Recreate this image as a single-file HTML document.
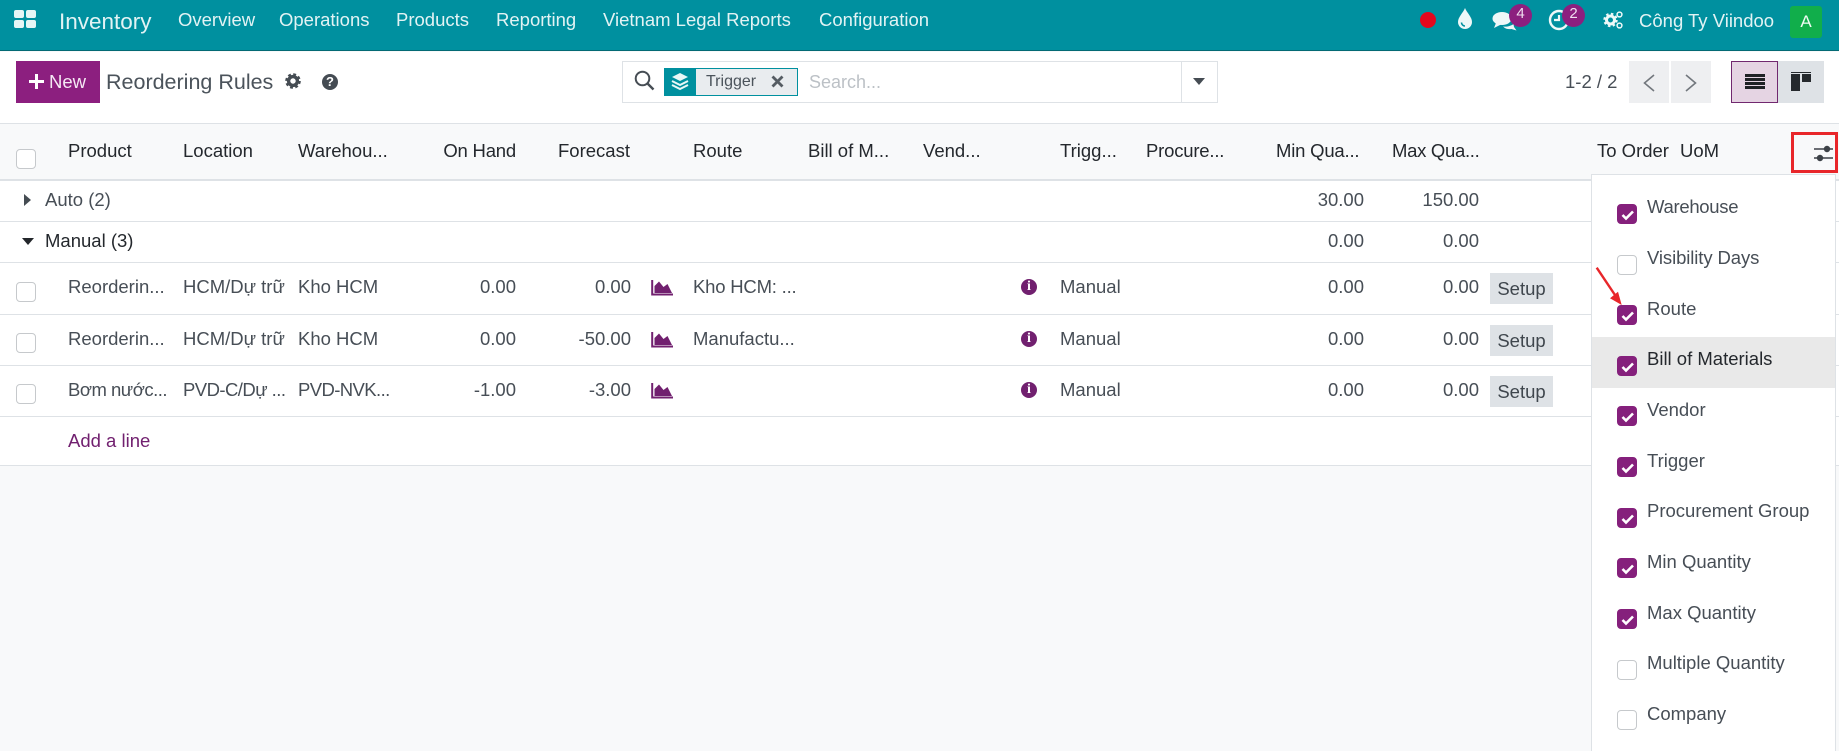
<!DOCTYPE html>
<html><head><meta charset="utf-8"><title>Reordering Rules</title>
<style>
html,body{margin:0;padding:0;width:1839px;height:751px;overflow:hidden;background:#f8f9fa}
body{font-family:"Liberation Sans","Noto Sans CJK SC",sans-serif;font-size:18.5px;color:#474e56;position:relative}
.a{position:absolute;box-sizing:border-box}
.t{position:absolute;white-space:nowrap;line-height:24px;margin-top:-12px}
.r{transform:translateX(-100%)}
.n{color:#e2f3f4}
.h{color:#24282d}
.line{position:absolute;left:0;width:1839px;height:1px;background:#dee2e6}
.cb{position:absolute;box-sizing:border-box;width:20px;height:20px;border:1px solid #c6c9cc;border-radius:4px;background:#fff}
.cb.on{background:#85207c;border-color:#85207c}
.cb.on svg{position:absolute;left:3px;top:4px}
.setup{position:absolute;left:1490px;width:63px;background:#dee2e6;color:#3f464d;text-align:center;line-height:31px;height:31px}
svg{position:absolute;display:block}
</style></head><body>

<!-- navbar -->
<div class="a" style="left:0;top:0;width:1839px;height:51px;background:#00909f;border-bottom:1px solid #046a74"></div>
<div class="a" style="left:14px;top:10px;width:10px;height:8px;background:#e6f6f6;border-radius:2px"></div>
<div class="a" style="left:26px;top:10px;width:10px;height:8px;background:#e6f6f6;border-radius:2px"></div>
<div class="a" style="left:14px;top:20px;width:10px;height:8px;background:#e6f6f6;border-radius:2px"></div>
<div class="a" style="left:26px;top:20px;width:10px;height:8px;background:#e6f6f6;border-radius:2px"></div>
<div class="t n" style="left:59px;top:21.500px;font-size:22.500px">Inventory</div>
<div class="t n" style="left:178px;top:20px">Overview</div>
<div class="t n" style="left:279px;top:20px">Operations</div>
<div class="t n" style="left:396px;top:20px">Products</div>
<div class="t n" style="left:496px;top:20px">Reporting</div>
<div class="t n" style="left:603px;top:20px">Vietnam Legal Reports</div>
<div class="t n" style="left:819px;top:20px">Configuration</div>

<div class="a" style="left:1420px;top:12px;width:16px;height:16px;border-radius:50%;background:#e3071d"></div>
<svg style="left:1457px;top:8px" width="16" height="21" viewBox="0 0 16 21"><path d="M8 0C6 5 1 9 1 14a7 7 0 0 0 14 0C15 9 10 5 8 0Z" fill="#eef8f8"/><path d="M4.500 14.500a3.500 3.500 0 0 0 3.500 3.500" fill="none" stroke="#00909f" stroke-width="1.600"/></svg>
<svg style="left:1492px;top:10px" width="26" height="22" viewBox="0 0 26 22"><ellipse cx="10" cy="8.500" rx="9.500" ry="6.500" fill="#eef8f8"/><path d="M4 13l-2 5 7-3.500Z" fill="#eef8f8"/><path d="M11 16.500c4 .5 8-.5 10.500-2.500l.5 3 2.500 3.500-5-1.500c-3 .5-6 0-8.500-2.500Z" fill="#eef8f8"/></svg>
<div class="a" style="left:1509px;top:4px;width:23px;height:23px;border-radius:50%;background:#8c1f7f"></div>
<div class="t" style="left:1509px;top:14px;width:23px;text-align:center;color:#f0dff0;font-size:15px">4</div>
<svg style="left:1548px;top:9px" width="24" height="23" viewBox="0 0 24 23"><circle cx="11" cy="11" r="9" fill="none" stroke="#eef8f8" stroke-width="2.400"/><path d="M11 6v5H6" fill="none" stroke="#eef8f8" stroke-width="2.200"/></svg>
<div class="a" style="left:1562px;top:4px;width:23px;height:23px;border-radius:50%;background:#8c1f7f"></div>
<div class="t" style="left:1562px;top:14px;width:23px;text-align:center;color:#f0dff0;font-size:15px">2</div>
<svg style="left:1603px;top:10px" width="21" height="20" viewBox="0 0 21 20"><circle cx="7.500" cy="10" r="4" fill="none" stroke="#eef8f8" stroke-width="3"/><circle cx="7.500" cy="10" r="6.200" fill="none" stroke="#eef8f8" stroke-width="2" stroke-dasharray="2.500 2.400"/><circle cx="16.500" cy="4.500" r="2.400" fill="none" stroke="#eef8f8" stroke-width="1.500"/><circle cx="16.500" cy="15.500" r="2.400" fill="none" stroke="#eef8f8" stroke-width="1.500"/></svg>
<div class="t n" style="left:1639px;top:20.500px">Công Ty Viindoo</div>
<div class="a" style="left:1790px;top:6px;width:32px;height:32px;background:#11ae4b;border-radius:3px;color:#eefbf2;text-align:center;line-height:32px;font-size:17px">A</div>

<!-- control panel -->
<div class="a" style="left:0;top:52px;width:1839px;height:71px;background:#fff"></div>
<div class="a" style="left:16px;top:61px;width:84px;height:42px;background:#8c1f7f"></div>
<svg style="left:29px;top:74px" width="15" height="15" viewBox="0 0 15 15"><path d="M6 0h3v6h6v3H9v6H6V9H0V6h6Z" fill="#fff"/></svg>
<div class="t" style="left:49px;top:81.500px;color:#f5e9f4">New</div>
<div class="t" style="left:106px;top:81.500px;font-size:21.500px;color:#4b535b">Reordering Rules</div>
<svg style="left:285px;top:73px" width="16" height="16" viewBox="0 0 17 17"><circle cx="8.500" cy="8.500" r="4.700" fill="none" stroke="#454c53" stroke-width="3.600"/><circle cx="8.500" cy="8.500" r="7" fill="none" stroke="#454c53" stroke-width="2.600" stroke-dasharray="3 2.500"/></svg>
<div class="a" style="left:322px;top:74px;width:16px;height:16px;border-radius:50%;background:#454c53;color:#fff;font-weight:bold;font-size:13px;line-height:16px;text-align:center">?</div>

<!-- search -->
<div class="a" style="left:622px;top:61px;width:596px;height:42px;border:1px solid #dee2e6;background:#fff"></div>
<div class="a" style="left:1181px;top:61px;width:1px;height:42px;background:#dee2e6"></div>
<svg style="left:634px;top:70px" width="21" height="21" viewBox="0 0 21 21"><circle cx="8.500" cy="8.500" r="6.800" fill="none" stroke="#464d54" stroke-width="2"/><path d="M13.500 13.500l6 6" stroke="#464d54" stroke-width="2.400"/></svg>
<div class="a" style="left:664px;top:68px;width:134px;height:28px;background:#e9ecef;border:1px solid #00909f"></div>
<div class="a" style="left:664px;top:68px;width:32px;height:28px;background:#00909f"></div>
<svg style="left:671px;top:73px" width="18" height="19" viewBox="0 0 18 19"><path d="M9 0l8 4-8 4-8-4Z" fill="#eaf7f7"/><path d="M1 8l8 4 8-4M1 12l8 4 8-4" fill="none" stroke="#eaf7f7" stroke-width="2"/></svg>
<div class="t" style="left:706px;top:82px;font-size:16px;color:#4b535b">Trigger</div>
<svg style="left:771px;top:75px" width="13" height="13" viewBox="0 0 13 13"><path d="M1.500 1.500l10 10M11.500 1.500l-10 10" stroke="#555c63" stroke-width="2.800"/></svg>
<div class="t" style="left:809px;top:82px;color:#bcc1c6;font-size:18px">Search...</div>
<svg style="left:1193px;top:78px" width="12" height="7" viewBox="0 0 12 7"><path d="M0 0h12L6 7Z" fill="#454c53"/></svg>

<!-- pager -->
<div class="t" style="left:1565px;top:82px">1-2 / 2</div>
<div class="a" style="left:1629px;top:61px;width:40px;height:42px;background:#eeeff1"></div>
<div class="a" style="left:1671px;top:61px;width:40px;height:42px;background:#eeeff1"></div>
<svg style="left:1643px;top:73.500px" width="12" height="18" viewBox="0 0 12 18"><path d="M11 1L1.500 9 11 17" fill="none" stroke="#72777d" stroke-width="1.600"/></svg>
<svg style="left:1685px;top:73.500px" width="12" height="18" viewBox="0 0 12 18"><path d="M1 1l9.500 8L1 17" fill="none" stroke="#72777d" stroke-width="1.600"/></svg>
<div class="a" style="left:1731px;top:61px;width:47px;height:42px;background:#e5d4e3;border:1px solid #71286f"></div>
<div class="a" style="left:1778px;top:61px;width:46px;height:42px;background:#dee2e6"></div>
<svg style="left:1745px;top:74px" width="20" height="15" viewBox="0 0 20 15"><path d="M0 0h20v3H0ZM0 4h20v3H0ZM0 8h20v3H0ZM0 12h20v3H0Z" fill="#1f2226"/></svg>
<svg style="left:1791px;top:72px" width="20" height="19" viewBox="0 0 20 19"><path d="M0 0h20v1H0ZM0 2h9v17H0ZM11 2h9v8h-9Z" fill="#25292d"/></svg>

<!-- list header -->
<div class="a" style="left:0;top:123px;width:1839px;height:58px;background:#f8f9fa;border-top:1px solid #dee2e6;border-bottom:2px solid #dee2e6"></div>
<div class="cb" style="left:16px;top:149px"></div>
<div class="t h" style="left:68px;top:151px">Product</div>
<div class="t h" style="left:183px;top:151px">Location</div>
<div class="t h" style="left:298px;top:151px">Warehou...</div>
<div class="t h r" style="left:516px;top:151px;letter-spacing:-.2px">On Hand</div>
<div class="t h" style="left:558px;top:151px">Forecast</div>
<div class="t h" style="left:693px;top:151px">Route</div>
<div class="t h" style="left:808px;top:151px">Bill of M...</div>
<div class="t h" style="left:923px;top:151px">Vend...</div>
<div class="t h" style="left:1060px;top:151px">Trigg...</div>
<div class="t h" style="left:1146px;top:151px;letter-spacing:-.2px">Procure...</div>
<div class="t h" style="left:1276px;top:151px;letter-spacing:-.2px">Min Qua...</div>
<div class="t h" style="left:1392px;top:151px;letter-spacing:-.3px">Max Qua...</div>
<div class="t h" style="left:1597px;top:151px">To Order</div>
<div class="t h" style="left:1680px;top:151px">UoM</div>
<div class="a" style="left:1791px;top:132px;width:47px;height:41px;border:3px solid #e8262a"></div>
<svg style="left:1814px;top:145px" width="19" height="18" viewBox="0 0 19 18"><path d="M0 4h19M0 13h19" stroke="#3c4147" stroke-width="1.600"/><circle cx="13" cy="4" r="3.200" fill="#3c4147"/><circle cx="6" cy="13" r="3.200" fill="#3c4147"/></svg>

<!-- body -->
<div class="a" style="left:0;top:181px;width:1839px;height:284px;background:#fff"></div>
<div class="line" style="top:221px"></div>
<div class="line" style="top:262px"></div>
<div class="line" style="top:314px"></div>
<div class="line" style="top:365px"></div>
<div class="line" style="top:416px"></div>
<div class="line" style="top:465px"></div>

<svg style="left:24px;top:194px" width="7" height="12" viewBox="0 0 7 12"><path d="M0 0l7 6-7 6Z" fill="#454c53"/></svg>
<div class="t" style="left:45px;top:200px">Auto (2)</div>
<div class="t r" style="left:1364px;top:200px">30.00</div>
<div class="t r" style="left:1479px;top:200px">150.00</div>
<svg style="left:22px;top:238px" width="12" height="7" viewBox="0 0 12 7"><path d="M0 0h12L6 7Z" fill="#23272b"/></svg>
<div class="t h" style="left:45px;top:241px">Manual (3)</div>
<div class="t r" style="left:1364px;top:241px">0.00</div>
<div class="t r" style="left:1479px;top:241px">0.00</div>

<!-- row 1 -->
<div class="cb" style="left:16px;top:282px"></div>
<div class="t" style="left:68px;top:286.500px">Reorderin...</div>
<div class="t" style="left:183px;top:286.500px">HCM/Dự trữ</div>
<div class="t" style="left:298px;top:286.500px">Kho HCM</div>
<div class="t r" style="left:516px;top:286.500px">0.00</div>
<div class="t r" style="left:631px;top:286.500px">0.00</div>
<svg style="left:651px;top:280px" width="22" height="16" viewBox="0 0 22 16"><path d="M1.200 0v14.500h21" fill="none" stroke="#71206f" stroke-width="2"/><path d="M3.500 13V6L8 1.500 12.500 7l4-3L21 13Z" fill="#71206f"/></svg>
<div class="t" style="left:693px;top:286.500px;letter-spacing:-.2px">Kho HCM: ...</div>
<div class="a" style="left:1021px;top:279px;width:16px;height:16px;border-radius:50%;background:#71206f;color:#fff;font-weight:bold;font-size:14px;line-height:16px;text-align:center;font-family:'Liberation Serif',serif">i</div>
<div class="t" style="left:1060px;top:286.500px">Manual</div>
<div class="t r" style="left:1364px;top:286.500px">0.00</div>
<div class="t r" style="left:1479px;top:286.500px">0.00</div>
<div class="setup" style="top:273px">Setup</div>

<!-- row 2 -->
<div class="cb" style="left:16px;top:333px"></div>
<div class="t" style="left:68px;top:338.500px">Reorderin...</div>
<div class="t" style="left:183px;top:338.500px">HCM/Dự trữ</div>
<div class="t" style="left:298px;top:338.500px">Kho HCM</div>
<div class="t r" style="left:516px;top:338.500px">0.00</div>
<div class="t r" style="left:631px;top:338.500px">-50.00</div>
<svg style="left:651px;top:332px" width="22" height="16" viewBox="0 0 22 16"><path d="M1.200 0v14.500h21" fill="none" stroke="#71206f" stroke-width="2"/><path d="M3.500 13V6L8 1.500 12.500 7l4-3L21 13Z" fill="#71206f"/></svg>
<div class="t" style="left:693px;top:338.500px">Manufactu...</div>
<div class="a" style="left:1021px;top:331px;width:16px;height:16px;border-radius:50%;background:#71206f;color:#fff;font-weight:bold;font-size:14px;line-height:16px;text-align:center;font-family:'Liberation Serif',serif">i</div>
<div class="t" style="left:1060px;top:338.500px">Manual</div>
<div class="t r" style="left:1364px;top:338.500px">0.00</div>
<div class="t r" style="left:1479px;top:338.500px">0.00</div>
<div class="setup" style="top:325px">Setup</div>

<!-- row 3 -->
<div class="cb" style="left:16px;top:384px"></div>
<div class="t" style="left:68px;top:390px;letter-spacing:-.5px">Bơm nước...</div>
<div class="t" style="left:183px;top:390px;letter-spacing:-.55px">PVD-C/Dự ...</div>
<div class="t" style="left:298px;top:390px;letter-spacing:-.6px">PVD-NVK...</div>
<div class="t r" style="left:516px;top:390px">-1.00</div>
<div class="t r" style="left:631px;top:390px">-3.00</div>
<svg style="left:651px;top:383px" width="22" height="16" viewBox="0 0 22 16"><path d="M1.200 0v14.500h21" fill="none" stroke="#71206f" stroke-width="2"/><path d="M3.500 13V6L8 1.500 12.500 7l4-3L21 13Z" fill="#71206f"/></svg>
<div class="a" style="left:1021px;top:382px;width:16px;height:16px;border-radius:50%;background:#71206f;color:#fff;font-weight:bold;font-size:14px;line-height:16px;text-align:center;font-family:'Liberation Serif',serif">i</div>
<div class="t" style="left:1060px;top:390px">Manual</div>
<div class="t r" style="left:1364px;top:390px">0.00</div>
<div class="t r" style="left:1479px;top:390px">0.00</div>
<div class="setup" style="top:376px">Setup</div>

<div class="t" style="left:68px;top:440.500px;color:#71206f">Add a line</div>

<!-- dropdown -->
<div class="a" style="left:1591px;top:174px;width:245px;height:590px;background:#fff;border:1px solid #dee2e6"></div>
<div class="a" style="left:1592px;top:337px;width:243px;height:51px;background:#e9e9e9"></div>

<div class="cb on" style="left:1617px;top:204px"><svg width="14" height="12" viewBox="0 0 14 12"><path d="M1.500 6l3.500 3.500 7-7" fill="none" stroke="#fff" stroke-width="2.600"/></svg></div>
<div class="t" style="left:1647px;top:207px;letter-spacing:-.3px">Warehouse</div>
<div class="cb" style="left:1617px;top:255px"></div>
<div class="t" style="left:1647px;top:257.500px;letter-spacing:-.1px">Visibility Days</div>
<div class="cb on" style="left:1617px;top:305px"><svg width="14" height="12" viewBox="0 0 14 12"><path d="M1.500 6l3.500 3.500 7-7" fill="none" stroke="#fff" stroke-width="2.600"/></svg></div>
<div class="t" style="left:1647px;top:308.500px">Route</div>
<div class="cb on" style="left:1617px;top:356px"><svg width="14" height="12" viewBox="0 0 14 12"><path d="M1.500 6l3.500 3.500 7-7" fill="none" stroke="#fff" stroke-width="2.600"/></svg></div>
<div class="t h" style="left:1647px;top:359px">Bill of Materials</div>
<div class="cb on" style="left:1617px;top:406px"><svg width="14" height="12" viewBox="0 0 14 12"><path d="M1.500 6l3.500 3.500 7-7" fill="none" stroke="#fff" stroke-width="2.600"/></svg></div>
<div class="t" style="left:1647px;top:409.500px">Vendor</div>
<div class="cb on" style="left:1617px;top:457px"><svg width="14" height="12" viewBox="0 0 14 12"><path d="M1.500 6l3.500 3.500 7-7" fill="none" stroke="#fff" stroke-width="2.600"/></svg></div>
<div class="t" style="left:1647px;top:460.500px">Trigger</div>
<div class="cb on" style="left:1617px;top:508px"><svg width="14" height="12" viewBox="0 0 14 12"><path d="M1.500 6l3.500 3.500 7-7" fill="none" stroke="#fff" stroke-width="2.600"/></svg></div>
<div class="t" style="left:1647px;top:511px">Procurement Group</div>
<div class="cb on" style="left:1617px;top:558px"><svg width="14" height="12" viewBox="0 0 14 12"><path d="M1.500 6l3.500 3.500 7-7" fill="none" stroke="#fff" stroke-width="2.600"/></svg></div>
<div class="t" style="left:1647px;top:561.500px">Min Quantity</div>
<div class="cb on" style="left:1617px;top:609px"><svg width="14" height="12" viewBox="0 0 14 12"><path d="M1.500 6l3.500 3.500 7-7" fill="none" stroke="#fff" stroke-width="2.600"/></svg></div>
<div class="t" style="left:1647px;top:612.500px">Max Quantity</div>
<div class="cb" style="left:1617px;top:660px"></div>
<div class="t" style="left:1647px;top:663px">Multiple Quantity</div>
<div class="cb" style="left:1617px;top:710px"></div>
<div class="t" style="left:1647px;top:714px">Company</div>

<!-- red arrow -->
<svg style="left:1590px;top:262px" width="40" height="50" viewBox="0 0 40 50"><path d="M6.700 5.700L27 36" stroke="#e8262a" stroke-width="2.400"/><path d="M31.700 43L20 36.300 28 29.700Z" fill="#e8262a"/></svg>
</body></html>
